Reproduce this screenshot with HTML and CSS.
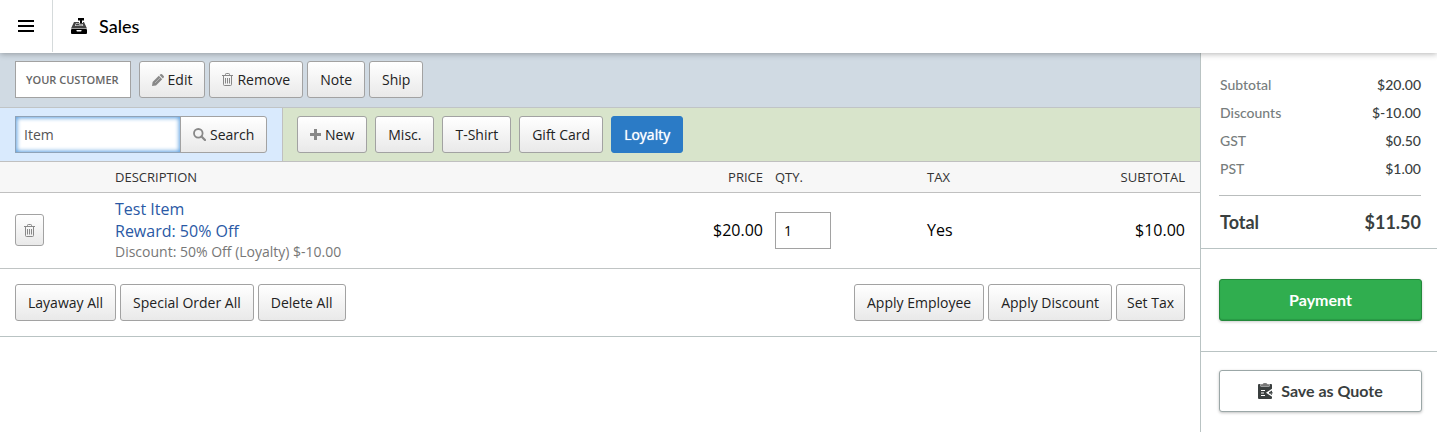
FILE: index.html
```
<!DOCTYPE html>
<html lang="en">
<head>
<meta charset="utf-8">
<meta name="viewport" content="width=device-width, initial-scale=1">
<title>Sales</title>
<link rel="stylesheet" href="styles.css">
</head>
<body>
<svg class="defs" aria-hidden="true">
  <symbol id="trash" viewBox="0 0 11 13">
    <path d="M0 2.500h11M3.500 2.500V1.300q0-.8.8-.8h2.400q.8 0 .8.8v1.200M1.500 2.500v9q0 1 1 1h6q1 0 1-1v-9M3.500 5v5.500M5.500 5v5.500M7.500 5v5.500" fill="none" stroke="currentColor"/>
  </symbol>
</svg>
<header class="topbar">
  <button class="menu" type="button" aria-label="Menu">
    <svg width="16" height="12" viewBox="0 0 16 12"><path d="M0 1h16M0 6h16M0 11h16" stroke="#000" stroke-width="2"/></svg>
  </button>
  <h1 class="title">
    <svg width="16" height="16" viewBox="0 0 16 16">
      <path d="M7 0h6v2.500h-2V5H9V2.500H7z" fill="#000"/>
      <path d="M3 4h5v1h4V4h1L16 10.500H0z" fill="#444"/>
      <path d="M5 5h3.500v1h3.300l.4 2H4z" fill="#fff"/>
      <path d="M5.300 5.500h2.700v1h3.500l.2 1H4.700z" fill="#444"/>
      <path d="M1 11h14q1 0 1 1v3q0 1-1 1H1q-1 0-1-1v-3q0-1 1-1z" fill="#000"/>
      <path d="M5.500 12h5v.8q0 .7-.7.7H6.200q-.7 0-.7-.7z" fill="#fff"/>
    </svg>
    Sales
  </h1>
</header>
<div class="layout">
  <main class="main">
    <section class="customer-bar">
      <span class="customer">YOUR CUSTOMER</span>
      <button class="btn" type="button"><svg width="12" height="12" viewBox="0 0 12 12" fill="#888"><path d="M0 12l.6-4L6.800 1.800l3.400 3.400L4 11.400z"/><path d="M7.500 1.100L8.500.3q.8-.6 1.500 0l1.700 1.700q.6.800 0 1.500l-.8 1z"/><path d="M3 9L8 4" stroke="#ddd" stroke-width=".5"/></svg>Edit</button>
      <button class="btn" type="button"><svg class="muted" width="11" height="13"><use href="#trash"/></svg>Remove</button>
      <button class="btn" type="button">Note</button>
      <button class="btn" type="button">Ship</button>
    </section>
    <section class="item-bar">
      <form class="search">
        <input class="search-input" type="text" placeholder="Item" aria-label="Item">
        <button class="btn search-btn" type="button"><svg width="13" height="13" viewBox="0 0 13 13"><circle cx="5.300" cy="5.300" r="4.300" fill="none" stroke="#888" stroke-width="1.800"/><path d="M8.500 8.500L12 12" stroke="#888" stroke-width="2.200" stroke-linecap="round"/></svg>Search</button>
      </form>
      <div class="quick">
        <button class="btn" type="button"><svg width="11" height="11" viewBox="0 0 11 11"><path d="M5.500 0v11M0 5.500h11" stroke="#888" stroke-width="3"/></svg>New</button>
        <button class="btn" type="button">Misc.</button>
        <button class="btn" type="button">T-Shirt</button>
        <button class="btn" type="button">Gift Card</button>
        <button class="btn loyalty" type="button">Loyalty</button>
      </div>
    </section>
    <table class="lines">
      <thead>
        <tr><th class="c-del"></th><th>DESCRIPTION</th><th class="c-price">PRICE</th><th class="c-qty">QTY.</th><th class="c-tax">TAX</th><th class="c-sub">SUBTOTAL</th></tr>
      </thead>
      <tbody>
        <tr>
          <td class="c-del"><button class="btn del" type="button" aria-label="Remove line"><svg class="muted" width="11" height="13"><use href="#trash"/></svg></button></td>
          <td><a class="item" href="#">Test Item</a><a class="item" href="#">Reward: 50% Off</a><span class="note">Discount: 50% Off (Loyalty) $-10.00</span></td>
          <td class="c-price">$20.00</td>
          <td class="c-qty"><input class="qty" type="text" value="1" aria-label="Quantity"></td>
          <td class="c-tax">Yes</td>
          <td class="c-sub">$10.00</td>
        </tr>
      </tbody>
    </table>
    <section class="actions">
      <div class="group">
        <button class="btn" type="button">Layaway All</button>
        <button class="btn" type="button">Special Order All</button>
        <button class="btn" type="button">Delete All</button>
      </div>
      <div class="group">
        <button class="btn" type="button">Apply Employee</button>
        <button class="btn" type="button">Apply Discount</button>
        <button class="btn compact" type="button">Set Tax</button>
      </div>
    </section>
  </main>
  <aside class="side">
    <section class="totals">
      <dl class="sums">
        <div class="sum"><dt>Subtotal</dt><dd>$20.00</dd></div>
        <div class="sum"><dt>Discounts</dt><dd>$-10.00</dd></div>
        <div class="sum"><dt>GST</dt><dd>$0.50</dd></div>
        <div class="sum"><dt>PST</dt><dd>$1.00</dd></div>
        <div class="sum total"><dt>Total</dt><dd>$11.50</dd></div>
      </dl>
    </section>
    <section class="pay">
      <button class="big payment" type="button">Payment</button>
    </section>
    <section class="quote">
      <button class="big save" type="button"><svg width="15" height="16" viewBox="0 0 15 16"><path d="M1 1h1.500v2.500h9V1H13q1 0 1 1v13q0 1-1 1H1q-1 0-1-1V2q0-1 1-1z" fill="#3a3f3f"/><path d="M3 1.200h1.500Q5 0 7 0t2.500 1.200H11V3H3z" fill="#777"/><path d="M3 7.500h4M3 10h3M3 12.500h4" stroke="#fff"/><path d="M14 5.800v1.700L11.500 9H15v1.500h-3.500L14 12v1.700L8 9.700z" fill="#fff"/><path d="M11 9.800h3.500" stroke="#3a3f3f" stroke-width="1.500"/></svg>Save as Quote</button>
    </section>
  </aside>
</div>
</body>
</html>
```
FILE: styles.css
```
* { box-sizing: border-box; }
body {
  margin: 0;
  min-height: 100vh;
  display: flex;
  flex-direction: column;
  background: #fff;
  color: #000;
  font: 14px/20px "Open Sans", sans-serif;
}
button, input { font: inherit; margin: 0; }
.defs { display: none; }

.topbar {
  position: relative;
  z-index: 1;
  display: flex;
  height: 53px;
  padding-bottom: 1px;
  background: #fff;
  box-shadow: 0 1px 6px rgba(0, 0, 0, .3);
}
.menu {
  width: 53px;
  padding: 0;
  border: 0;
  border-right: 1px solid #d5dadb;
  background: none;
}
.menu svg { display: block; margin: 0 auto; }
.title {
  display: flex;
  align-items: center;
  gap: 12px;
  margin: 0;
  padding-left: 18px;
  font: 500 18px/24px Lato, sans-serif;
}

.layout { flex: 1; display: flex; }
.main { flex: 1; min-width: 0; }

.btn {
  display: inline-flex;
  align-items: center;
  justify-content: center;
  gap: 4px;
  height: 37px;
  padding: 0 12px;
  border: 1px solid #a2a2a2;
  border-radius: 3px;
  background: linear-gradient(#fff, #e9e9e9);
  color: #222;
  white-space: nowrap;
}
.compact { padding: 0 10px; }
.muted { color: #888; }

.customer-bar {
  display: flex;
  align-items: flex-start;
  gap: 4px;
  height: 55px;
  padding: 8px 15px;
  border-bottom: 1px solid #c0c4c6;
  background: #d0dae3;
}
.customer {
  margin-right: 4px;
  padding: 0 11px 0 10px;
  border: 1px solid #a2a2a2;
  background: #fff;
  color: #666;
  font-size: 11px;
  font-weight: 600;
  line-height: 35px;
}

.item-bar { display: flex; height: 54px; border-bottom: 1px solid #c0c0c0; }
.search {
  display: flex;
  align-items: center;
  width: 283px;
  padding-left: 15px;
  border-right: 1px solid #c0c0c0;
  background: #d9eafd;
}
.search-input {
  width: 166px;
  height: 37px;
  padding: 0 8px;
  border: 1px solid #8fa3b8;
  border-radius: 0;
  outline: 0;
  background: #fff;
  box-shadow: inset 0 0 4px 1px #5b9fe0;
}
.search-input::placeholder { color: #555; opacity: 1; }
.search-btn { margin-left: -1px; border-radius: 0 3px 3px 0; }
.quick {
  flex: 1;
  display: flex;
  align-items: center;
  gap: 8px;
  padding-left: 14px;
  background: #d8e4cb;
}
.loyalty {
  border-color: #2b7bc6;
  background: #2b7bc6;
  color: #fff;
  font-weight: 500;
  text-shadow: 0 0 1px #fff;
}

.lines { width: 100%; border-collapse: separate; border-spacing: 0; table-layout: fixed; }
.lines th {
  height: 31px;
  padding: 0;
  border-bottom: 1px solid #c0c0c0;
  background: #f7f7f7;
  color: #333;
  font-size: 13px;
  font-weight: 400;
  text-align: left;
}
.lines td {
  height: 76px;
  padding: 0 0 1px;
  border-bottom: 1px solid #c0c4c4;
  font-size: 16px;
}
.lines .c-del { width: 115px; padding-left: 15px; }
.lines .c-price { width: 100px; padding-right: 12px; text-align: right; }
.lines .c-qty { width: 152px; }
.lines .c-tax { width: 100px; }
.lines .c-sub { width: 173px; padding-right: 15px; text-align: right; }
.del { width: 29px; height: 32px; padding: 0; vertical-align: middle; }
.item { display: block; color: #2a59a5; font-size: 16px; line-height: 22px; text-decoration: none; }
.note { display: block; color: #777; font-size: 14px; }
.qty {
  display: block;
  width: 56px;
  height: 37px;
  padding: 0 8px;
  border: 1px solid #a2a2a2;
  background: #fff;
  font-size: 14px;
}

.actions {
  display: flex;
  justify-content: space-between;
  align-items: center;
  height: 68px;
  padding: 0 15px;
  border-bottom: 1px solid #b9c3c3;
}
.group { display: flex; gap: 4px; }

.side {
  width: 237px;
  border-left: 1px solid #b9c3c3;
  font-family: Lato, sans-serif;
}
.totals { height: 196px; padding: 18px 16px 0 18px; border-bottom: 1px solid #b9c3c3; }
.sums { margin: 0; }
.sum { display: flex; justify-content: space-between; line-height: 28px; color: #3a3f3f; font-weight: 500; }
.sum dt { padding-left: 1px; color: #777d7d; }
.sum dd { margin: 0; }
.total {
  margin-top: 12px;
  border-top: 1px solid #b9bdbd;
  font-size: 18px;
  font-weight: 700;
  line-height: 52px;
}
.total dt { color: inherit; }
.pay { padding: 30px 15px 30px 18px; border-bottom: 1px solid #b9c3c3; }
.quote { padding: 18px 15px 18px 18px; }
.big {
  display: flex;
  align-items: center;
  justify-content: center;
  gap: 8px;
  width: 100%;
  height: 42px;
  border-radius: 3px;
  font-size: 16px;
  font-weight: 700;
}
.payment {
  border: 1px solid #23893b;
  background: #30ae4f;
  color: #fff;
  box-shadow: 0 1px 3px rgba(0, 0, 0, .2), inset 0 -1px 1px #2a9a45;
}
.save {
  border: 1px solid #9ba7a7;
  background: #fff;
  color: #3a3f3f;
  box-shadow: 0 1px 3px rgba(0, 0, 0, .25);
}
```
